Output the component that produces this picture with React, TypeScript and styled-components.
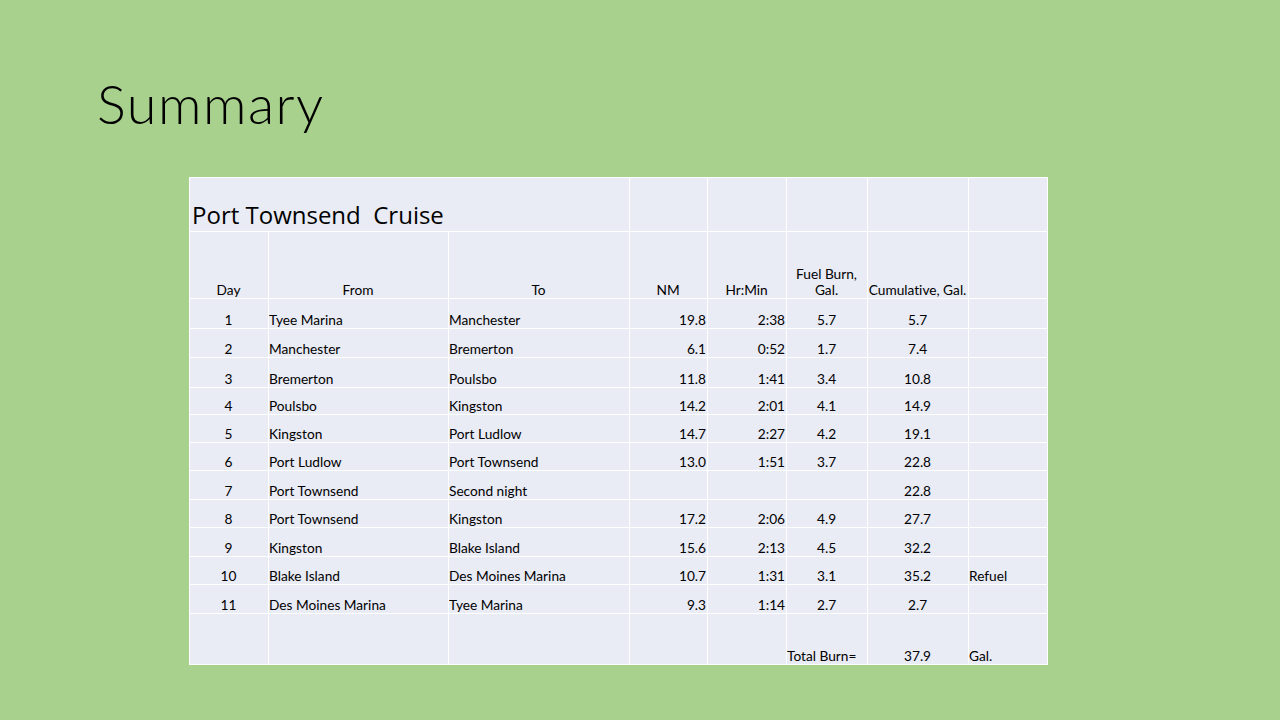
import React from 'react';
import styled, {createGlobalStyle} from 'styled-components';

type Align = 'left' | 'center' | 'right';

interface Leg {
  day: number;
  from: string;
  to: string;
  nm: string;
  time: string;
  fuel: string;
  total: string;
  note?: string;
  height: number;
}

const LEGS: Leg[] = [
  {day: 1, from: 'Tyee Marina', to: 'Manchester', nm: '19.8', time: '2:38', fuel: '5.7', total: '5.7', height: 30},
  {day: 2, from: 'Manchester', to: 'Bremerton', nm: '6.1', time: '0:52', fuel: '1.7', total: '7.4', height: 29},
  {day: 3, from: 'Bremerton', to: 'Poulsbo', nm: '11.8', time: '1:41', fuel: '3.4', total: '10.8', height: 30},
  {day: 4, from: 'Poulsbo', to: 'Kingston', nm: '14.2', time: '2:01', fuel: '4.1', total: '14.9', height: 27},
  {day: 5, from: 'Kingston', to: 'Port Ludlow', nm: '14.7', time: '2:27', fuel: '4.2', total: '19.1', height: 28},
  {day: 6, from: 'Port Ludlow', to: 'Port Townsend', nm: '13.0', time: '1:51', fuel: '3.7', total: '22.8', height: 28},
  {day: 7, from: 'Port Townsend', to: 'Second night', nm: '', time: '', fuel: '', total: '22.8', height: 29},
  {day: 8, from: 'Port Townsend', to: 'Kingston', nm: '17.2', time: '2:06', fuel: '4.9', total: '27.7', height: 28},
  {day: 9, from: 'Kingston', to: 'Blake Island', nm: '15.6', time: '2:13', fuel: '4.5', total: '32.2', height: 29},
  {day: 10, from: 'Blake Island', to: 'Des Moines Marina', nm: '10.7', time: '1:31', fuel: '3.1', total: '35.2', note: 'Refuel', height: 28},
  {day: 11, from: 'Des Moines Marina', to: 'Tyee Marina', nm: '9.3', time: '1:14', fuel: '2.7', total: '2.7', height: 29},
];

// column widths in px, summing to the sheet width
const COLUMNS = [79, 180, 181, 78, 79, 81, 101, 79];

const App = () => {
  return (
    <>
      <GlobalStyle />
      <Slide>
        <Title>Summary</Title>
        <Sheet>
          <colgroup>
            {COLUMNS.map((w, i) => (
              <col key={i} style={{width: w}} />
            ))}
          </colgroup>
          <tbody>
            <Row $h={54}>
              <SheetTitle colSpan={3}>{'Port Townsend  Cruise'}</SheetTitle>
              <Cell />
              <Cell />
              <Cell />
              <Cell />
              <Cell />
            </Row>
            <Row $h={67}>
              <Cell align="center">Day</Cell>
              <Cell align="center">From</Cell>
              <Cell align="center">To</Cell>
              <Cell align="center">NM</Cell>
              <Cell align="center">Hr:Min</Cell>
              <Cell align="center">
                Fuel Burn,
                <br />
                Gal.
              </Cell>
              <Cell align="center" $nowrap>
                Cumulative, Gal.
              </Cell>
              <Cell />
            </Row>
            {LEGS.map((leg) => (
              <Row key={leg.day} $h={leg.height}>
                <Cell align="center">{leg.day}</Cell>
                <Cell>{leg.from}</Cell>
                <Cell>{leg.to}</Cell>
                <Cell align="right">{leg.nm}</Cell>
                <Cell align="right">{leg.time}</Cell>
                <Cell align="center">{leg.fuel}</Cell>
                <Cell align="center">{leg.total}</Cell>
                <Cell>{leg.note}</Cell>
              </Row>
            ))}
            <Row $h={51}>
              <Cell />
              <Cell />
              <Cell />
              <Cell />
              <Cell />
              <Cell $nowrap>Total Burn=</Cell>
              <Cell align="center">37.9</Cell>
              <Cell>Gal.</Cell>
            </Row>
          </tbody>
        </Sheet>
      </Slide>
    </>
  );
};

const GlobalStyle = createGlobalStyle`
  html, body {
    margin: 0;
    padding: 0;
  }
  body {
    font-family: Lato, "Liberation Sans", sans-serif;
    font-variant-ligatures: none;
  }
`;

const Slide = styled.div`
  width: 1280px;
  height: 720px;
  box-sizing: border-box;
  background: #a9d18e;
  padding: 72px 0 0 97px;
  overflow: hidden;
`;

const Title = styled.h1`
  margin: 0;
  font-family: Lato, "Liberation Sans", sans-serif;
  font-weight: 300;
  font-size: 54px;
  line-height: 64px;
  letter-spacing: 1.5px;
  color: #000;
`;

const Sheet = styled.table`
  margin: 41px 0 0 92px;
  width: 858px;
  table-layout: fixed;
  border-collapse: collapse;
  background: #e9ebf5;
  border: 1px solid #ffffff;
`;

const Cell = styled.td<{align?: Align; $nowrap?: boolean}>`
  border: 1px solid #ffffff;
  padding: 0 1px 0 0;
  vertical-align: bottom;
  text-align: ${({align}) => align || 'left'};
  font-size: 13.7px;
  line-height: 16px;
  color: #000;
  white-space: ${({$nowrap}) => ($nowrap ? 'nowrap' : 'normal')};
`;

const SheetTitle = styled.td`
  border: 1px solid #ffffff;
  padding: 0 2px 2px 2px;
  vertical-align: bottom;
  font-family: "Open Sans", Lato, sans-serif;
  font-size: 24px;
  line-height: 28px;
  white-space: pre;
  color: #000;
`;

const Row = styled.tr<{$h: number}>`
  height: ${({$h}) => $h}px;
`;

export default App;
